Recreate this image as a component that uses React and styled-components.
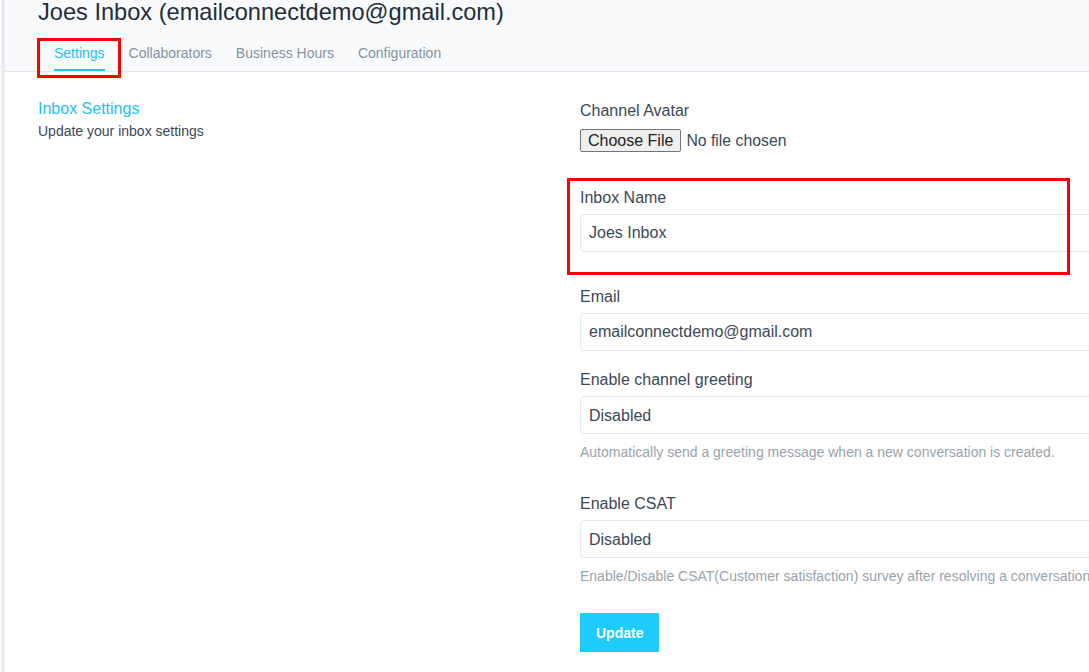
import React from 'react';
import styled, { createGlobalStyle } from 'styled-components';

const Global = createGlobalStyle`
  html, body {
    margin: 0;
    padding: 0;
    background: #fff;
    overflow: hidden;
  }
  body {
    font-family: "Liberation Sans", Arial, sans-serif;
    color: #3c4858;
  }
`

const Page = styled.div`
  display: flex;
  width: 1089px;
  height: 672px;
  overflow: hidden;
  position: relative;
`

const SideEdge = styled.div`
  flex: 0 0 4px;
  margin-left: 1px;
  background: #e9ecf0;
`

const Main = styled.div`
  flex: 1;
  display: flex;
  flex-direction: column;
  min-width: 0;
`

const Header = styled.div`
  background: #f9fafb;
  border-bottom: 1px solid #e4e8ee;
  padding-left: 33px;
  height: 72px;
  box-sizing: border-box;
`

const Title = styled.h1`
  margin: 0;
  font-size: 23.6px;
  line-height: 25px;
  font-weight: 400;
  color: #1f2d3d;
  white-space: nowrap;
`

const Tabs = styled.ul`
  list-style: none;
  display: flex;
  gap: 24px;
  margin: 18px 0 0;
  padding: 0 0 0 16px;
`

const Tab = styled.li`
  position: relative;
  font-size: 14px;
  line-height: 20px;
  padding-bottom: 6px;
  color: ${p => (p.$active ? '#22c3f3' : '#8492a6')};
  border-bottom: 2px solid ${p => (p.$active ? '#22c3f3' : 'transparent')};
`

const Highlight = styled.span`
  position: absolute;
  border: 3px solid #ff0000;
  pointer-events: none;
`

const Body = styled.div`
  display: grid;
  grid-template-columns: 542px 620px;
  padding: 25px 0 0 33px;
`

const Intro = styled.div`
  display: flex;
  flex-direction: column;
`

const IntroTitle = styled.h2`
  margin: 0;
  font-size: 16px;
  line-height: 24px;
  font-weight: 400;
  color: #22c3f3;
`

const IntroText = styled.p`
  margin: 0;
  font-size: 14px;
  line-height: 20px;
  color: #3c4858;
`

const Form = styled.form`
  display: flex;
  flex-direction: column;
  padding-top: 2px;
`

const Field = styled.div`
  position: relative;
  display: flex;
  flex-direction: column;
  margin-bottom: ${p => p.$mb || 0}px;
`

const Label = styled.label`
  font-size: 16px;
  line-height: 24px;
  color: #3c4858;
  margin-bottom: ${p => p.$mb || 4}px;
`

const FileInput = styled.input`
  font-family: "Liberation Sans", Arial, sans-serif;
  font-size: 15.8px;
  color: #3c4858;
  height: 23px;
  padding: 0;
  margin: 0;

  &::file-selector-button {
    font-family: "Liberation Sans", Arial, sans-serif;
    font-size: 16px;
    height: 23px;
    padding: 0 7px;
    margin-right: 5px;
    color: #222;
    background: #efefef;
    border: 1px solid #767676;
    border-radius: 2px;
  }
`

const TextInput = styled.input`
  box-sizing: border-box;
  width: 100%;
  height: 38px;
  margin: 0;
  padding: 0 8px;
  border: 1px solid #e4e9ef;
  border-radius: 4px;
  background: #fff;
  font-family: "Liberation Sans", Arial, sans-serif;
  font-size: 16px;
  color: #3c4858;
  outline: none;
`

const Select = styled.select`
  box-sizing: border-box;
  width: 100%;
  height: 38px;
  margin: 0;
  padding: 0 8px;
  border: 1px solid #e4e9ef;
  border-radius: 4px;
  background: #fff;
  appearance: none;
  font-family: "Liberation Sans", Arial, sans-serif;
  font-size: 16px;
  color: #3c4858;
  outline: none;
`

const Help = styled.p`
  margin: 8px 0 0;
  font-size: 14px;
  line-height: 20px;
  color: #9aa3ad;
  white-space: nowrap;
`

const Button = styled.button`
  align-self: flex-start;
  height: 39px;
  padding: 0 16px;
  border: none;
  border-radius: 0;
  background: #1ecbfd;
  color: #fff;
  font-family: "Liberation Sans", Arial, sans-serif;
  font-size: 14px;
  font-weight: 700;
`

export default function App() {
  return (
    <>
      <Global />
      <Page>
        <SideEdge />
        <Main>
          <Header>
            <Title>Joes Inbox (emailconnectdemo@gmail.com)</Title>
            <Tabs>
              <Tab $active>
                Settings
                <Highlight style={{ left: -17, top: -5, right: -16, bottom: -9 }} />
              </Tab>
              <Tab>Collaborators</Tab>
              <Tab>Business Hours</Tab>
              <Tab>Configuration</Tab>
            </Tabs>
          </Header>
          <Body>
            <Intro>
              <IntroTitle>Inbox Settings</IntroTitle>
              <IntroText>Update your inbox settings</IntroText>
            </Intro>
            <Form onSubmit={e => e.preventDefault()}>
              <Field $mb={34}>
                <Label $mb={6}>Channel Avatar</Label>
                <FileInput type="file" />
              </Field>
              <Field $mb={33}>
                <Label>Inbox Name</Label>
                <TextInput defaultValue="Joes Inbox" />
                <Highlight style={{ left: -13, top: -8, width: 503, height: 97, boxSizing: 'border-box' }} />
              </Field>
              <Field $mb={17}>
                <Label>Email</Label>
                <TextInput defaultValue="emailconnectdemo@gmail.com" />
              </Field>
              <Field $mb={30}>
                <Label>Enable channel greeting</Label>
                <Select defaultValue="disabled">
                  <option value="enabled">Enabled</option>
                  <option value="disabled">Disabled</option>
                </Select>
                <Help>Automatically send a greeting message when a new conversation is created.</Help>
              </Field>
              <Field $mb={27}>
                <Label>Enable CSAT</Label>
                <Select defaultValue="disabled">
                  <option value="enabled">Enabled</option>
                  <option value="disabled">Disabled</option>
                </Select>
                <Help>Enable/Disable CSAT(Customer satisfaction) survey after resolving a conversation</Help>
              </Field>
              <Button type="submit">Update</Button>
            </Form>
          </Body>
        </Main>
      </Page>
    </>
  );
}
